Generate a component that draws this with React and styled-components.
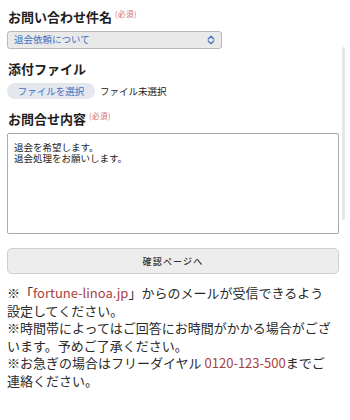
import React from 'react'
import styled, { createGlobalStyle } from 'styled-components'

const GlobalStyle = createGlobalStyle`
  html, body {
    margin: 0;
    padding: 0;
    background: #fff;
  }
  body {
    font-family: "Noto Sans CJK JP", "Noto Sans", sans-serif;
    color: #222;
  }
`

function App() {
  return (
    <Page>
      <GlobalStyle />
      <Form>
        <Label>
          お問い合わせ件名<Required>(必須)</Required>
        </Label>
        <SelectBox>
          <SelectText>退会依頼について</SelectText>
          <svg width="8" height="10" viewBox="0 0 8 10" fill="none">
            <path d="M1.2 4 L4 1.3 L6.8 4" stroke="#3d6fc2" strokeWidth="1.2" strokeLinecap="round" strokeLinejoin="round" />
            <path d="M1.2 6 L4 8.7 L6.8 6" stroke="#3d6fc2" strokeWidth="1.2" strokeLinecap="round" strokeLinejoin="round" />
          </svg>
        </SelectBox>

        <Label $gap>添付ファイル</Label>
        <FileRow>
          <FileButton>ファイルを選択</FileButton>
          <FileStatus>ファイル未選択</FileStatus>
        </FileRow>

        <Label $gap>
          お問合せ内容<Required>(必須)</Required>
        </Label>
        <TextArea readOnly value={'退会を希望します。\n退会処理をお願いします。'} />

        <SubmitButton type="button">確認ページへ</SubmitButton>

        <Notes>
          ※「<Accent>fortune-linoa.jp</Accent>」からのメールが受信できるよう
          <br />
          設定してください。
          <br />
          ※時間帯によってはご回答にお時間がかかる場合がござ
          <br />
          います。予めご了承ください。
          <br />
          ※お急ぎの場合はフリーダイヤル <Accent>0120-123-500</Accent>までご
          <br />
          連絡ください。
        </Notes>
      </Form>
      <ScrollThumb />
    </Page>
  )
}

const Page = styled.div`
  position: relative;
  width: 350px;
  height: 420px;
  overflow: hidden;
  background: #fff;
`

const Form = styled.div`
  display: flex;
  flex-direction: column;
  padding: 8px 11px 0 7px;
`

const Label = styled.div`
  display: flex;
  align-items: flex-start;
  font-size: 13px;
  font-weight: 700;
  line-height: 18px;
  color: #1e1e1e;
  margin-top: ${p => (p.$gap ? '11px' : '0')};
  margin-bottom: 5px;
  padding-left: 1px;
`

const Required = styled.span`
  font-size: 7.5px;
  font-weight: 400;
  line-height: 12px;
  color: #c9706f;
  margin-left: 3px;
  letter-spacing: 0.5px;
`

const SelectBox = styled.div`
  display: flex;
  align-items: center;
  justify-content: space-between;
  box-sizing: border-box;
  width: 215px;
  height: 18px;
  padding: 0 6px 0 6px;
  background: #e9e9e9;
  border: 1px solid #b8b8b8;
  border-radius: 3px;
`

const SelectText = styled.span`
  font-size: 9.5px;
  line-height: 1;
  color: #3d6fc2;
`

const FileRow = styled.div`
  display: flex;
  align-items: center;
  gap: 5px;
  height: 16px;
`

const FileButton = styled.div`
  display: flex;
  align-items: center;
  justify-content: center;
  width: 88px;
  height: 16px;
  border-radius: 8px;
  background: #e4e7ee;
  font-size: 9.5px;
  color: #3d6fc2;
`

const FileStatus = styled.span`
  font-size: 9.5px;
  color: #222;
`

const TextArea = styled.textarea`
  box-sizing: border-box;
  width: 332px;
  height: 101px;
  margin: 0;
  padding: 8px 6px;
  border: 1px solid #a9a9a9;
  border-radius: 2px;
  font-family: "Noto Sans CJK JP", "Noto Sans", sans-serif;
  font-size: 9.5px;
  line-height: 11px;
  color: #222;
  resize: none;
  outline: none;
  background: #fff;
`

const SubmitButton = styled.button`
  box-sizing: border-box;
  width: 332px;
  height: 26px;
  margin-top: 14px;
  padding: 0;
  border: 1px solid #cdcdcd;
  border-radius: 5px;
  background: #ededed;
  font-family: "Noto Sans CJK JP", "Noto Sans", sans-serif;
  font-size: 9px;
  font-weight: 500;
  letter-spacing: 1.2px;
  color: #333;
`

const Notes = styled.p`
  margin: 10px 0 0;
  font-size: 13px;
  line-height: 17.6px;
  color: #2a2a2a;
  white-space: nowrap;
`

const Accent = styled.span`
  color: #a8423f;
`

const ScrollThumb = styled.div`
  position: absolute;
  top: 47px;
  left: 342px;
  width: 3px;
  height: 173px;
  border-radius: 2px;
  background: #e6e6e6;
`

export default App
